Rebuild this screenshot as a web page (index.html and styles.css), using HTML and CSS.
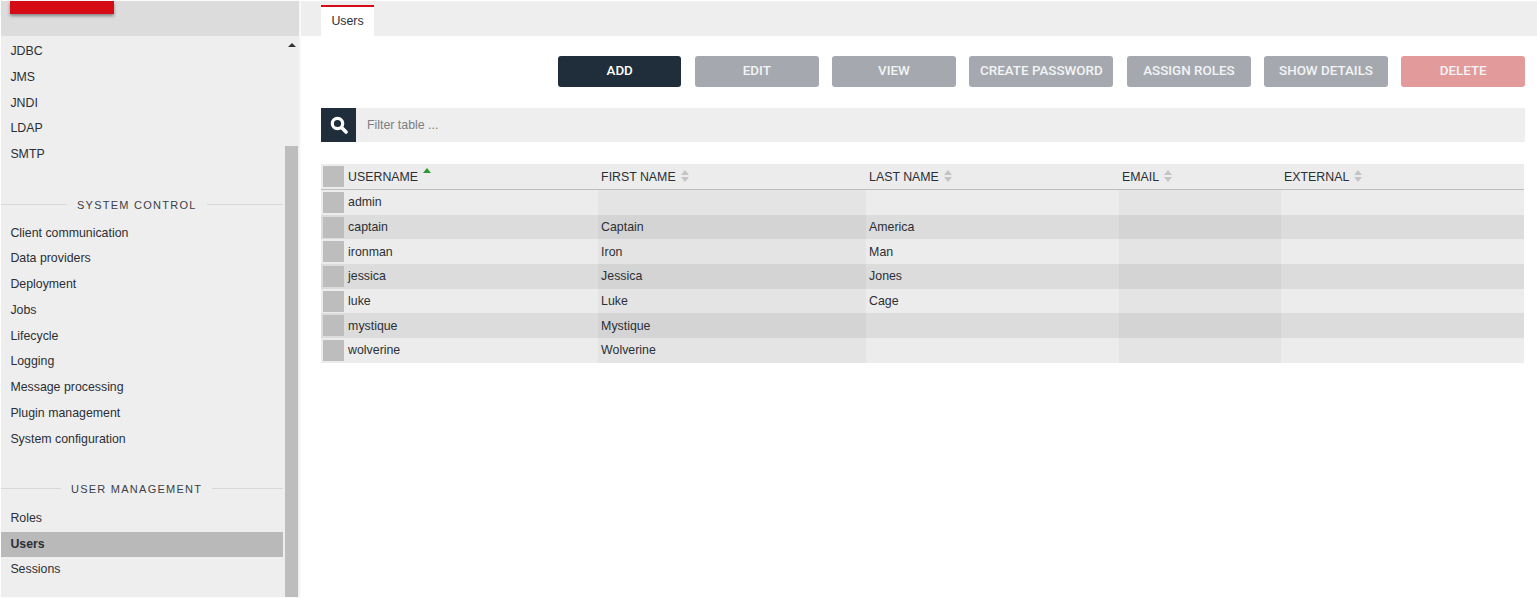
FILE: index.html
```html
<!DOCTYPE html>
<html lang="en">
<head>
<meta charset="utf-8">
<title>Users</title>
<link rel="stylesheet" href="styles.css">
</head>
<body>
<div class="app">
  <aside class="sidebar">
    <div class="brand"><div class="logo"></div></div>
    <div class="nav-wrap">
      <nav class="nav">
        <ul class="nav-list">
          <li>JDBC</li><li>JMS</li><li>JNDI</li><li>LDAP</li><li>SMTP</li>
        </ul>
        <h2 class="nav-heading heading-system"><span>SYSTEM CONTROL</span></h2>
        <ul class="nav-list">
          <li>Client communication</li><li>Data providers</li><li>Deployment</li><li>Jobs</li><li>Lifecycle</li><li>Logging</li><li>Message processing</li><li>Plugin management</li><li>System configuration</li>
        </ul>
        <h2 class="nav-heading heading-user"><span>USER MANAGEMENT</span></h2>
        <ul class="nav-list">
          <li>Roles</li><li class="active">Users</li><li>Sessions</li>
        </ul>
      </nav>
      <div class="scrollbar">
        <div class="scroll-track"><span class="scroll-up"></span></div>
        <div class="scroll-thumb"></div>
      </div>
    </div>
  </aside>
  <main class="main">
    <div class="tabs"><div class="tab">Users</div></div>
    <div class="content">
      <div class="toolbar">
        <button class="btn btn-primary">ADD</button>
        <button class="btn">EDIT</button>
        <button class="btn">VIEW</button>
        <button class="btn btn-wide">CREATE PASSWORD</button>
        <button class="btn">ASSIGN ROLES</button>
        <button class="btn">SHOW DETAILS</button>
        <button class="btn btn-danger">DELETE</button>
      </div>
      <div class="filter">
        <span class="filter-icon">
          <svg viewBox="0 0 18 18" width="18" height="18"><circle cx="7.5" cy="7.5" r="5.2" fill="none" stroke="#fff" stroke-width="3.2"/><path d="M11.8 11.8l4.2 4.2" stroke="#fff" stroke-width="3.6" stroke-linecap="round"/></svg>
        </span>
        <span class="filter-text">Filter table ...</span>
      </div>
      <table class="grid">
        <colgroup><col class="c-check"><col class="c-user"><col class="c-first"><col class="c-last"><col class="c-email"><col class="c-ext"></colgroup>
        <thead>
          <tr>
            <th class="check"><span class="box"></span></th>
            <th>USERNAME <span class="sort sort-asc"></span></th>
            <th>FIRST NAME <span class="sort"></span></th>
            <th>LAST NAME <span class="sort"></span></th>
            <th>EMAIL <span class="sort"></span></th>
            <th>EXTERNAL <span class="sort"></span></th>
          </tr>
        </thead>
        <tbody>
          <tr><td class="check"><span class="box"></span></td><td>admin</td><td></td><td></td><td></td><td></td></tr>
          <tr><td class="check"><span class="box"></span></td><td>captain</td><td>Captain</td><td>America</td><td></td><td></td></tr>
          <tr><td class="check"><span class="box"></span></td><td>ironman</td><td>Iron</td><td>Man</td><td></td><td></td></tr>
          <tr><td class="check"><span class="box"></span></td><td>jessica</td><td>Jessica</td><td>Jones</td><td></td><td></td></tr>
          <tr><td class="check"><span class="box"></span></td><td>luke</td><td>Luke</td><td>Cage</td><td></td><td></td></tr>
          <tr><td class="check"><span class="box"></span></td><td>mystique</td><td>Mystique</td><td></td><td></td><td></td></tr>
          <tr><td class="check"><span class="box"></span></td><td>wolverine</td><td>Wolverine</td><td></td><td></td><td></td></tr>
        </tbody>
      </table>
    </div>
  </main>
</div>
</body>
</html>
```
FILE: styles.css
```css
* { box-sizing: border-box; }
html, body { margin: 0; padding: 0; height: 100%; background: #fff; overflow: hidden; }
body { font-family: "Liberation Sans", Arial, sans-serif; font-size: 12.35px; color: #2b2f36; }

.app { display: flex; height: 597px; padding: 1px 0 0 1px; }

.sidebar { width: 298px; flex: none; display: flex; flex-direction: column; background: #eee; box-shadow: 1px 0 2px rgba(0,0,0,.06); }
.brand { height: 35px; flex: none; background: #dcdcdc; padding-left: 9px; }
.logo { width: 104px; height: 13px; background: #d50b16; box-shadow: 0 2px 3px rgba(0,0,0,.4); }

.nav-wrap { flex: 1; min-height: 0; display: flex; }
.nav { width: 282px; flex: none; padding-top: 3px; }
.nav-list { list-style: none; margin: 0; padding: 0; }
.nav-list li { height: 25.75px; line-height: 25.75px; padding-left: 9.4px; }
.nav-list li.active { background: #b9b9b9; font-weight: 700; }

.nav-heading { display: flex; align-items: center; margin: 0; height: 25px; font-size: 11px; font-weight: 400; letter-spacing: 1.25px; color: #3a3f47; }
.nav-heading::before, .nav-heading::after { content: ""; flex: 1; height: 1px; background: #d8d8d8; }
.nav-heading span { padding: 0 10px; }
.heading-system { margin: 24.4px 0 3.6px; }
.heading-system::before, .heading-user::before { flex: none; }
.heading-system::before { width: 66px; }
.heading-user::before { width: 60px; }
.heading-user { margin: 24px 0 4.5px; }

.scrollbar { width: 16px; flex: none; display: flex; flex-direction: column; padding-left: 2px; }
.scroll-track { height: 110px; flex: none; position: relative; }
.scroll-up { position: absolute; left: 3px; top: 7px; width: 0; height: 0; border-left: 4px solid transparent; border-right: 4px solid transparent; border-bottom: 4px solid #333; }
.scroll-thumb { flex: 1; background: #bdbdbd; width: 13px; }

.main { flex: 1; min-width: 0; padding-left: 2px; display: flex; flex-direction: column; }
.tabs { height: 35px; flex: none; background: #eee; padding: 4px 0 0 20px; display: flex; }
.tab { width: 53px; background: #fff; border-top: 2px solid #d50b16; text-align: center; line-height: 29px; color: #2b2f36; }

.content { padding: 20px 12px 0 20px; }
.toolbar { display: flex; gap: 13.75px; padding-left: 237px; height: 31px; }
.btn { flex: none; width: 123.4px; height: 31px; border: 0; border-radius: 3px; padding: 0 0 2px; background: #a5a9af; color: #f3f4f5; font-family: "Roboto", "Liberation Sans", sans-serif; font-size: 13.4px; font-weight: 500; }
.btn-wide { width: 144px; }
.btn-primary { background: #202d3b; color: #fff; }
.btn-danger { background: #e39a9b; }

.filter { display: flex; align-items: center; height: 34px; margin-top: 21px; background: #eee; }
.filter-icon { width: 35px; height: 34px; flex: none; background: #202d3b; display: flex; align-items: center; justify-content: center; }
.filter-text { margin-left: 11px; color: #7d7f83; }

.grid { width: 1203px; margin-top: 22px; border-collapse: separate; border-spacing: 0; table-layout: fixed; }
.c-check { width: 24px; }
.c-user { width: 253px; }
.c-first { width: 268px; }
.c-last { width: 253px; }
.c-email { width: 162px; }
.c-ext { width: 243px; }
.grid th, .grid td { padding: 0 0 0 3.1px; text-align: left; font-weight: 400; white-space: nowrap; }
.grid th { height: 26px; background: #ececec; border-bottom: 1px solid #bdbdbd; }
.grid td { height: 24.7px; background: #ececec; }
.grid tbody tr:nth-child(even) td { background: #dcdcdc; }
.grid tbody td:nth-child(3), .grid tbody td:nth-child(5) { background: #e4e4e4; }
.grid tbody tr:nth-child(even) td:nth-child(3), .grid tbody tr:nth-child(even) td:nth-child(5) { background: #d4d4d4; }
.grid .check { padding: 0 0 0 2px; }
.box { display: block; width: 21px; height: 21px; background: #bdbdbd; }
.sort { display: inline-block; width: 9px; height: 12px; margin-left: 2px; vertical-align: -1px; position: relative; }
.sort::before, .sort::after { content: ""; position: absolute; left: 0; width: 0; height: 0; border-left: 4.5px solid transparent; border-right: 4.5px solid transparent; }
.sort::before { top: 0; border-bottom: 5px solid #c4c4c4; }
.sort::after { bottom: 0; border-top: 5px solid #c4c4c4; }
.sort-asc::before { top: -2px; border-bottom-color: #2e9a2e; }
.sort-asc::after { display: none; }
```
